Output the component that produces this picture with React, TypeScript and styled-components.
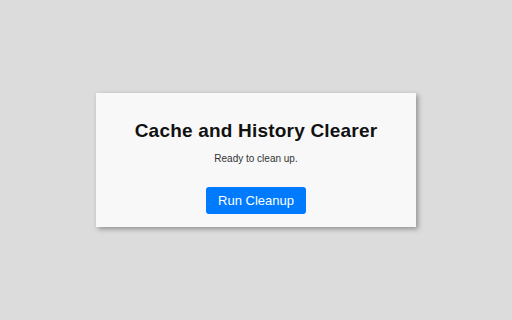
import React from 'react'
import styled, { createGlobalStyle } from 'styled-components'

const GlobalStyle = createGlobalStyle`
  html, body {
    margin: 0;
    padding: 0;
    height: 100%;
  }
  body {
    background: #dcdcdc;
    font-family: 'Liberation Sans', Arial, sans-serif;
  }
  #root {
    height: 100%;
  }
`

const Page = styled.div`
  height: 100%;
  display: flex;
  align-items: center;
  justify-content: center;
`

const Card = styled.div`
  width: 320px;
  box-sizing: border-box;
  padding: 27px 20px 13px;
  background: #f8f8f8;
  box-shadow: 2px 2px 5px rgba(0, 0, 0, 0.35);
  display: flex;
  flex-direction: column;
  align-items: center;
`

const Title = styled.h1`
  margin: 0;
  font-size: 19px;
  line-height: 22px;
  font-weight: bold;
  letter-spacing: 0.2px;
  color: #111;
`

const Status = styled.p`
  margin: 11px 0 0;
  font-size: 10px;
  line-height: 12px;
  color: #333;
`

const CleanButton = styled.button`
  margin-top: 22px;
  width: 100px;
  height: 27px;
  padding: 0;
  border: none;
  border-radius: 3px;
  background: #007bff;
  color: #fff;
  font-family: 'Liberation Sans', Arial, sans-serif;
  font-size: 13px;
  cursor: pointer;
`

export default function App() {
  return (
    <>
      <GlobalStyle />
      <Page>
        <Card>
          <Title>Cache and History Clearer</Title>
          <Status>Ready to clean up.</Status>
          <CleanButton>Run Cleanup</CleanButton>
        </Card>
      </Page>
    </>
  )
}
